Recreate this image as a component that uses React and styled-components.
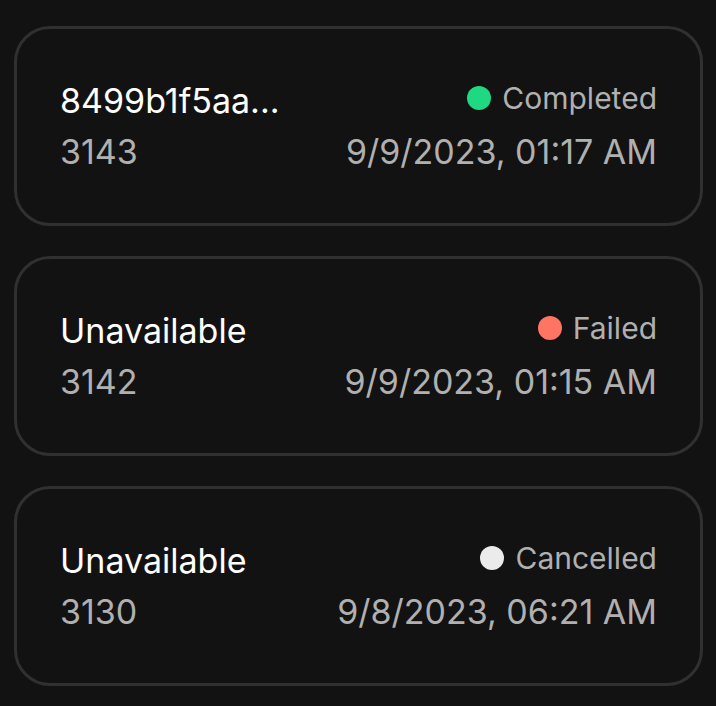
import styled, { createGlobalStyle } from "styled-components"

const GlobalStyle = createGlobalStyle`
html, body {
margin:0;
padding:0;
background:#121212;
}
body {
font-family: Inter, "Noto Sans", sans-serif;
}
`

const List = styled.div`
display:flex;
flex-direction:column;
gap:30px;
padding:26px 13px 20px 14px;
`

const Card = styled.div`
height:200px;
box-sizing:border-box;
border:3px solid #303030;
border-radius:36px;
background:#121212;
padding:0 43px;
display:grid;
grid-template-columns:1fr auto;
align-content:center;
align-items:center;
row-gap:0;
`

const Title = styled.div`
color:#ffffff;
font-size:34px;
line-height:51px;
`

const Sub = styled.div`
color:#b0b0b0;
font-size:34px;
line-height:51px;
justify-self:${props => (props.right ? "end" : "start")};
`

const Status = styled.div`
display:flex;
align-items:center;
gap:11px;
justify-self:end;
color:#b0b0b0;
font-size:30px;
line-height:40px;
margin-top:-6px;
`

const Dot = styled.span`
width:24px;
height:24px;
border-radius:50%;
background:${props => props.color};
`

const statusColors = {
    Completed: "#1ed882",
    Failed: "#ff7462",
    Cancelled: "#ebebeb",
}

const jobs = [
    { title: "8499b1f5aa...", id: "3143", status: "Completed", date: "9/9/2023, 01:17 AM" },
    { title: "Unavailable", id: "3142", status: "Failed", date: "9/9/2023, 01:15 AM" },
    { title: "Unavailable", id: "3130", status: "Cancelled", date: "9/8/2023, 06:21 AM" },
]

function App() {
    return (
        <>
            <GlobalStyle />
            <List>
                {jobs.map(job => (
                    <Card key={job.id}>
                        <Title>{job.title}</Title>
                        <Status>
                            <Dot color={statusColors[job.status]} />
                            {job.status}
                        </Status>
                        <Sub>{job.id}</Sub>
                        <Sub right>{job.date}</Sub>
                    </Card>
                ))}
            </List>
        </>
    )
}

export default App
